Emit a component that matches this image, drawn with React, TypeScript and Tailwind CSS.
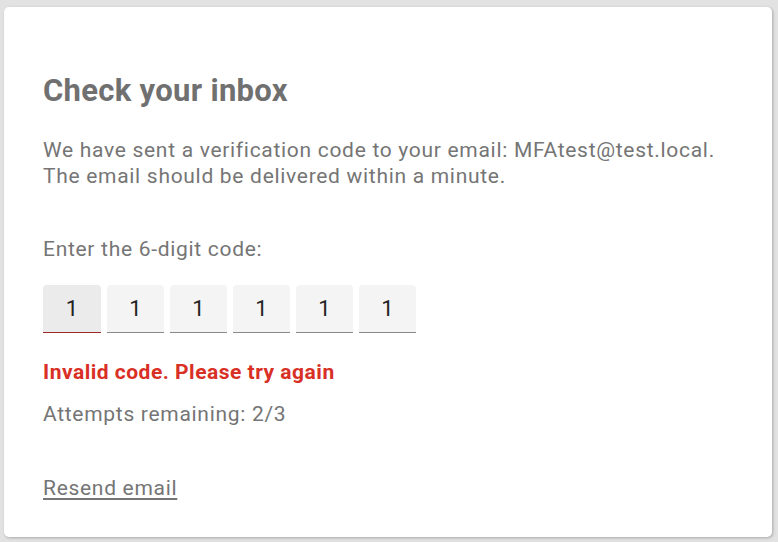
export default function App() {
  const digits = ['1', '1', '1', '1', '1', '1'];

  return (
    <div className="h-[542px] w-[778px] overflow-hidden bg-[#e2e2e2] pt-[7px] pl-[4px] font-['Roboto',sans-serif]">
      <div className="h-[530px] w-[768px] rounded-[5px] bg-white pt-[66px] pl-[39px] shadow-[1px_1px_3px_rgba(0,0,0,0.25)]">
        <h1 className="text-[31px] leading-[36px] font-bold tracking-[0.3px] text-[#707070]">Check your inbox</h1>

        <p className="mt-[28px] text-[21px] leading-[26px] tracking-[0.7px] text-[#757575]">
          We have sent a verification code to your email: MFAtest@test.local.
          <br />
          The email should be delivered within a minute.
        </p>

        <p className="mt-[47px] text-[21px] leading-[26px] tracking-[0.7px] text-[#757575]">Enter the 6-digit code:</p>

        {/* code inputs */}
        <div className="mt-[23px] flex gap-[6px]">
          {digits.map((d, i) => (
            <div
              key={i}
              className={`flex h-[48px] w-[57px] items-center justify-center rounded-t-[4px] border-b text-[22px] text-[#222] ${
                i === 0 ? 'w-[58px] border-[#9b2b2b] bg-[#ebebeb]' : 'border-[#8a8a8a] bg-[#f4f4f4]'
              }`}
            >
              {d}
            </div>
          ))}
        </div>

        <p className="mt-[26px] text-[21px] leading-[26px] font-bold tracking-[0.5px] text-[#d93025]">
          Invalid code. Please try again
        </p>
        <p className="mt-[16px] text-[21px] leading-[26px] tracking-[0.7px] text-[#757575]">Attempts remaining: 2/3</p>

        <a
          href="#"
          className="mt-[48px] block w-fit text-[21px] leading-[26px] tracking-[0.7px] text-[#757575] underline underline-offset-[3px]"
        >
          Resend email
        </a>
      </div>
    </div>
  );
}
